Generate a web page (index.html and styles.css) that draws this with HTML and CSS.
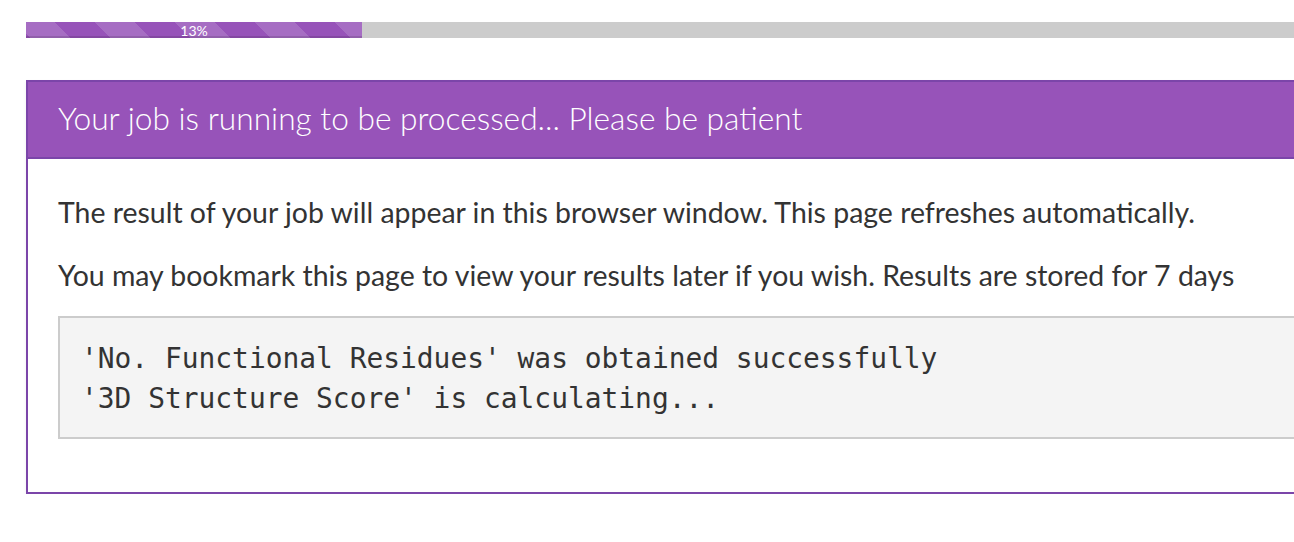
FILE: index.html
```html
<!DOCTYPE html>
<html lang="en">
<head>
<meta charset="utf-8">
<title>Job running</title>
<link rel="stylesheet" href="styles.css">
</head>
<body>
<div class="page">
  <div class="progress">
    <div class="progress-bar" style="width: 336px">13%</div>
  </div>
  <div class="panel">
    <div class="panel-heading">Your job is running to be processed... Please be patient</div>
    <div class="panel-body">
      <p class="note">The result of your job will appear in this browser window. This page refreshes automatically.</p>
      <p class="note">You may bookmark this page to view your results later if you wish. Results are stored for 7 days</p>
      <pre class="status">'No. Functional Residues' was obtained successfully
'3D Structure Score' is calculating...</pre>
    </div>
  </div>
</div>
</body>
</html>
```
FILE: styles.css
```css
html, body {
  margin: 0;
  padding: 0;
  background: #ffffff;
  overflow: hidden;
}
.page {
  padding: 22px 0 0 26px;
  width: 1320px;
  font-family: "Lato", "Liberation Sans", sans-serif;
  color: #333333;
}
.progress {
  height: 16px;
  background: #cccccc;
  display: flex;
}
.progress-bar {
  height: 16px;
  background-color: #9753b9;
  background-image: linear-gradient(45deg, rgba(255,255,255,.15) 25%, transparent 25%, transparent 50%, rgba(255,255,255,.15) 50%, rgba(255,255,255,.15) 75%, transparent 75%, transparent);
  background-size: 80px 80px;
  background-position: -11px 0;
  box-shadow: inset 0 -2px 0 rgba(0,0,0,.12);
  color: #ffffff;
  font-size: 14px;
  font-weight: 400;
  line-height: 17px;
  text-align: center;
}
.panel {
  margin-top: 42px;
  border: 2px solid #7b45a9;
  box-shadow: 0 2px 4px rgba(0,0,0,.06);
  background: #ffffff;
}
.panel-heading {
  background: #9753b9;
  color: #ffffff;
  border-bottom: 2px solid #7b45a9;
  font-weight: 300;
  font-size: 31.7px;
  height: 75px;
  line-height: 73px;
  padding-left: 30px;
}
.panel-body {
  padding: 31px 30px 53px 30px;
}
.note {
  margin: 0 0 19px 0;
  font-size: 28.45px;
  line-height: 44px;
}
.status {
  margin: 0;
  background: #f4f4f4;
  border: 2px solid #cccccc;
  padding: 21px 21px 18px 21px;
  font-family: "DejaVu Sans Mono", monospace;
  font-size: 27.9px;
  line-height: 40px;
  color: #333333;
}
```
